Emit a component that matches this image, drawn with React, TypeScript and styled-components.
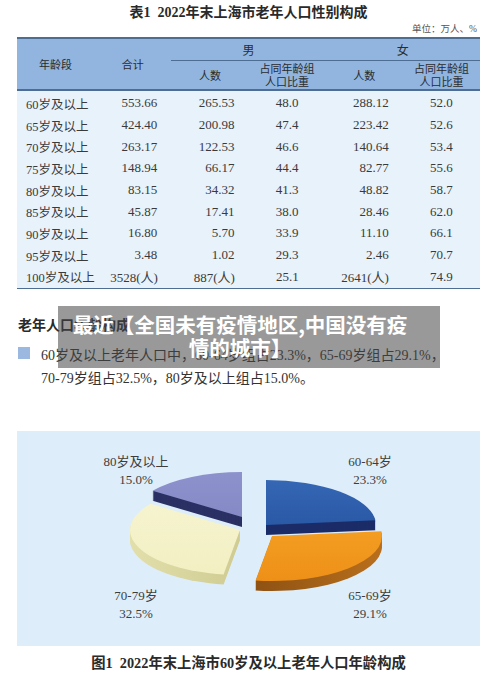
import styled, { createGlobalStyle } from "styled-components";

const serif = `"Liberation Serif", "Noto Sans CJK SC", serif`;
const sans = `"Noto Sans CJK SC", "Noto Sans", sans-serif`;

const GlobalStyle = createGlobalStyle`
  body {
    margin: 0;
    background: #fff;
  }
`;

type Align = "left" | "right" | "center";
type Row = [string, string, string, string, string, string];

const rows: Row[] = [
  ["60岁及以上", "553.66", "265.53", "48.0", "288.12", "52.0"],
  ["65岁及以上", "424.40", "200.98", "47.4", "223.42", "52.6"],
  ["70岁及以上", "263.17", "122.53", "46.6", "140.64", "53.4"],
  ["75岁及以上", "148.94", "66.17", "44.4", "82.77", "55.6"],
  ["80岁及以上", "83.15", "34.32", "41.3", "48.82", "58.7"],
  ["85岁及以上", "45.87", "17.41", "38.0", "28.46", "62.0"],
  ["90岁及以上", "16.80", "5.70", "33.9", "11.10", "66.1"],
  ["95岁及以上", "3.48", "1.02", "29.3", "2.46", "70.7"],
  ["100岁及以上", "3528(人)", "887(人)", "25.1", "2641(人)", "74.9"],
];

const aligns: Align[] = ["left", "right", "right", "center", "right", "center"];

// pie geometry, in the chart panel's own coordinates
const RX = 110;
const RY = 45;
const DEPTH = 10;

type Slice = {
  key: string;
  cx: number;
  cy: number;
  from: number;
  to: number;
  top: string;
  side: string;
};

const slices: Slice[] = [
  { key: "yellow", cx: 223, cy: 99, from: 188.6, to: 305.6, top: "url(#gYellow)", side: "url(#sYellow)" },
  { key: "orange", cx: 255, cy: 105, from: 83.9, to: 188.6, top: "url(#gOrange)", side: "url(#sOrange)" },
  { key: "purple", cx: 225, cy: 86, from: 305.6, to: 360, top: "url(#gPurple)", side: "#2b3164" },
  { key: "blue", cx: 249, cy: 94, from: 0, to: 83.9, top: "url(#gBlue)", side: "#1b2c68" },
];

const labels = [
  { x: 119, y: 30, lines: ["80岁及以上", "15.0%"] },
  { x: 353, y: 30, lines: ["60-64岁", "23.3%"] },
  { x: 119, y: 164, lines: ["70-79岁", "32.5%"] },
  { x: 353, y: 164, lines: ["65-69岁", "29.1%"] },
];

function point(cx: number, cy: number, deg: number) {
  const r = (deg * Math.PI) / 180;
  return [cx + RX * Math.sin(r), cy - RY * Math.cos(r)];
}

function slicePath({ cx, cy, from, to }: Slice) {
  const [x0, y0] = point(cx, cy, from);
  const [x1, y1] = point(cx, cy, to);
  const large = to - from > 180 ? 1 : 0;
  return `M${cx} ${cy} L${x0} ${y0} A${RX} ${RY} 0 ${large} 1 ${x1} ${y1} Z`;
}

function PieChart() {
  return (
    <svg width="463" height="215" viewBox="0 0 463 215">
      <defs>
        <linearGradient id="gBlue" x1="0" y1="0" x2="0" y2="1">
          <stop offset="0" stopColor="#3567b4" />
          <stop offset="1" stopColor="#2a59a6" />
        </linearGradient>
        <linearGradient id="gOrange" x1="0" y1="0" x2="0" y2="1">
          <stop offset="0" stopColor="#f39d22" />
          <stop offset="1" stopColor="#ee9018" />
        </linearGradient>
        <linearGradient id="sOrange" x1="0" y1="0" x2="1" y2="0">
          <stop offset="0" stopColor="#8e5213" />
          <stop offset="1" stopColor="#b96f1c" />
        </linearGradient>
        <linearGradient id="gYellow" x1="0" y1="0" x2="0" y2="1">
          <stop offset="0" stopColor="#f6f4cf" />
          <stop offset="1" stopColor="#f2efc2" />
        </linearGradient>
        <linearGradient id="sYellow" x1="0" y1="0" x2="1" y2="0">
          <stop offset="0" stopColor="#e2dfab" />
          <stop offset="1" stopColor="#cfcb92" />
        </linearGradient>
        <linearGradient id="gPurple" x1="0" y1="0" x2="0" y2="1">
          <stop offset="0" stopColor="#8d91cc" />
          <stop offset="1" stopColor="#858ac6" />
        </linearGradient>
      </defs>
      {slices.map((s) => {
        const d = slicePath(s);
        return (
          <g key={s.key}>
            {Array.from({ length: DEPTH }, (_, i) => (
              <path key={i} d={d} fill={s.side} transform={`translate(0 ${DEPTH - i})`} />
            ))}
            <path d={d} fill={s.top} />
          </g>
        );
      })}
      {labels.map((l) =>
        l.lines.map((t, i) => (
          <ChartLabel key={t} x={l.x} y={l.y + i * 18} textAnchor="middle" dominantBaseline="central">
            {t}
          </ChartLabel>
        ))
      )}
    </svg>
  );
}

export default function App() {
  return (
    <>
      <GlobalStyle />
      <Page>
        <Title>表1&nbsp;&nbsp;2022年末上海市老年人口性别构成</Title>
        <Unit>单位：万人、%</Unit>

        <Table>
          <Head>
            <HeadCell $tall>年龄段</HeadCell>
            <HeadCell $tall>合计</HeadCell>
            <GroupCell>男</GroupCell>
            <GroupCell>女</GroupCell>
            <HeadCell>人数</HeadCell>
            <HeadCell>
              占同年龄组
              <br />
              人口比重
            </HeadCell>
            <HeadCell>人数</HeadCell>
            <HeadCell>
              占同年龄组
              <br />
              人口比重
            </HeadCell>
          </Head>
          <Body>
            {rows.map((r) => (
              <BodyRow key={r[0]}>
                {r.map((v, i) => (
                  <Cell key={i} $align={aligns[i]}>
                    {v}
                  </Cell>
                ))}
              </BodyRow>
            ))}
          </Body>
        </Table>

        <Heading>老年人口年龄构成</Heading>
        <Legend>
          <Swatch />
          <LegendText>
            <span>60岁及以上老年人口中，60-64岁组占23.3%，65-69岁组占29.1%，</span>
            <span>70-79岁组占32.5%，80岁及以上组占15.0%。</span>
          </LegendText>
        </Legend>

        <ChartPanel>
          <PieChart />
        </ChartPanel>
        <Caption>图1&nbsp;&nbsp;2022年末上海市60岁及以上老年人口年龄构成</Caption>

        <Banner>
          最近【全国未有疫情地区,中国没有疫
          <br />
          情的城市】
        </Banner>
      </Page>
    </>
  );
}

const Page = styled.div`
  position: relative;
  width: 500px;
  height: 676px;
  box-sizing: border-box;
  padding: 4px 20px 0 17px;
  overflow: hidden;
  font-family: ${serif};
  color: #333;
`;

const Title = styled.div`
  text-align: center;
  font-size: 14px;
  font-weight: bold;
  line-height: 18px;
  color: #2a2a2a;
`;

const Unit = styled.div`
  text-align: right;
  padding-right: 3px;
  font-size: 9.5px;
  line-height: 14px;
  color: #555;
`;

const Table = styled.div`
  margin-top: 1px;
  border-top: 2px solid #4d6d93;
  border-bottom: 1.5px solid #4d6d93;
`;

const Head = styled.div`
  display: grid;
  grid-template-columns: repeat(6, 1fr);
  grid-template-rows: 22px 28px;
  background: #91b5df;
  border-bottom: 2px solid #4d6d93;
  font-family: ${sans};
  font-size: 11px;
  line-height: 13px;
  color: #2c2c2c;
`;

const HeadCell = styled.div<{ $tall?: boolean }>`
  grid-row: ${(p) => (p.$tall ? "span 2" : "auto")};
  display: flex;
  align-items: center;
  justify-content: center;
  text-align: center;
`;

const GroupCell = styled.div`
  grid-column: span 2;
  display: flex;
  align-items: center;
  justify-content: center;
  border-bottom: 1px solid #4d6d93;
  font-size: 12px;
`;

const Body = styled.div`
  background: #e8f2fb;
  padding: 1.5px 0 0;
`;

const BodyRow = styled.div`
  display: grid;
  grid-template-columns: repeat(6, 1fr);
  height: 21.7px;
  align-items: center;
  font-size: 13px;
  color: #3a3a3a;
`;

const Cell = styled.div<{ $align: Align }>`
  text-align: ${(p) => p.$align};
  font-size: ${(p) => (p.$align === "left" ? "12.5px" : "13px")};
  padding: ${(p) => (p.$align === "left" ? "0 0 0 9px" : p.$align === "right" ? "0 14px 0 0" : "0")};
  white-space: nowrap;
`;

const Heading = styled.div`
  margin-top: 27px;
  margin-left: 1px;
  font-size: 14px;
  font-weight: bold;
  line-height: 20px;
  color: #2a2a2a;
`;

const Legend = styled.div`
  display: flex;
  align-items: flex-start;
  gap: 11px;
  margin-top: 8px;
  margin-left: 1px;
`;

const Swatch = styled.div`
  width: 12px;
  height: 12px;
  margin-top: 3px;
  background: #9bb8e1;
  flex-shrink: 0;
`;

const LegendText = styled.div`
  display: flex;
  flex-direction: column;
  font-size: 14px;
  line-height: 23px;
  white-space: nowrap;
  color: #333;
`;

const ChartPanel = styled.div`
  margin-top: 41px;
  height: 215px;
  background: #ddedf9;
`;

const ChartLabel = styled.text`
  font-family: ${serif};
  font-size: 13px;
  fill: #3d3d3d;
`;

const Caption = styled.div`
  margin-top: 7px;
  text-align: center;
  font-size: 14.3px;
  font-weight: bold;
  line-height: 20px;
  color: #2a2a2a;
`;

const Banner = styled.div`
  position: absolute;
  left: 58px;
  top: 306px;
  width: 382px;
  box-sizing: border-box;
  padding: 7px 24px 9px 6px;
  background: rgba(70, 70, 70, 0.55);
  color: #fff;
  font-family: ${sans};
  font-weight: bold;
  font-size: 20.5px;
  line-height: 23px;
  text-align: center;
  white-space: nowrap;
`;
